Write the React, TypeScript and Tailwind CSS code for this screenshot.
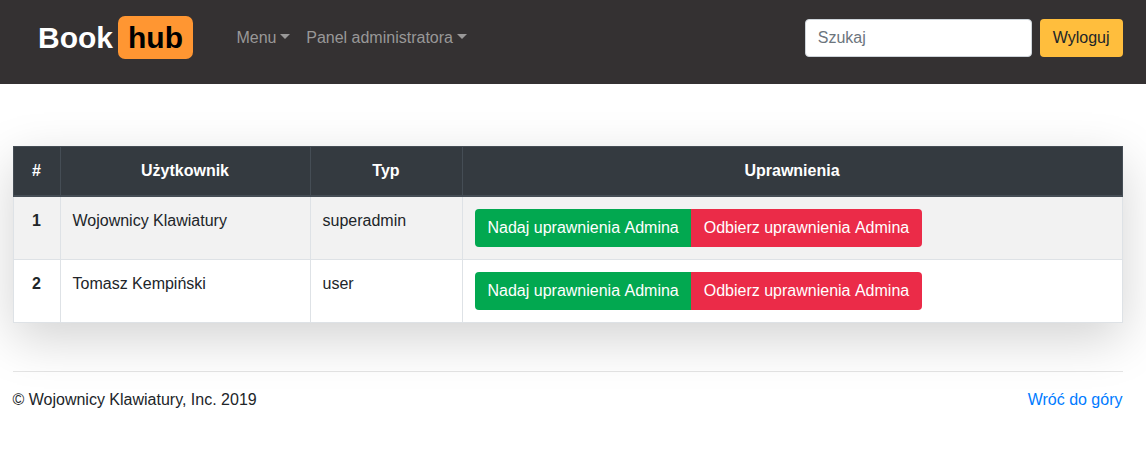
const users = [
  { id: 1, name: 'Wojownicy Klawiatury', type: 'superadmin' },
  { id: 2, name: 'Tomasz Kempiński', type: 'user' },
];

function NavDropdown({ label }: { label: string }) {
  return (
    <a href="#" className="block px-2 py-2 whitespace-nowrap text-[#999898]">
      {label}
      <span className="ml-[3.7px] inline-block border-x-[5px] border-t-[5px] border-b-0 border-x-transparent border-t-current align-[4.08px]" />
    </a>
  );
}

function Navbar() {
  return (
    <nav className="relative z-10 flex h-[84px] items-start bg-[#343132] pr-[23.5px] pl-[38px]">
      <a href="#" className="mt-4 flex items-center text-[30px] leading-[43px] font-bold text-white">
        Book
        <span className="ml-[5px] rounded-[7px] bg-[#ff9632] px-[10px] text-black">hub</span>
      </a>
      <div className="mt-[18px] ml-[35.5px] flex">
        <NavDropdown label="Menu" />
        <NavDropdown label="Panel administratora" />
      </div>
      <form className="mt-[19px] ml-auto flex gap-2">
        <input
          type="search"
          placeholder="Szukaj"
          className="h-[38px] w-[227px] rounded border border-[#ced4da] bg-white px-3 py-1.5 text-[#495057] placeholder:text-[#6c757d]"
        />
        <button type="button" className="h-[38px] rounded bg-[#ffbe3d] px-[13px] text-[#212529]">
          Wyloguj
        </button>
      </form>
    </nav>
  );
}

function UsersTable() {
  return (
    <table className="w-full table-fixed border-collapse border border-[#dee2e6] shadow-[0_16px_48px_rgba(0,0,0,0.175)]">
      <colgroup>
        <col className="w-[47px]" />
        <col className="w-[250px]" />
        <col className="w-[152px]" />
        <col />
      </colgroup>
      <thead className="bg-[#343a40] text-white">
        <tr>
          {['#', 'Użytkownik', 'Typ', 'Uprawnienia'].map((h) => (
            <th key={h} className="border border-b-2 border-[#454d55] p-3 text-center font-bold">
              {h}
            </th>
          ))}
        </tr>
      </thead>
      <tbody>
        {users.map((u) => (
          <tr key={u.id} className="bg-white odd:bg-[#f2f2f2]">
            <th className="border border-[#dee2e6] p-3 text-center align-top font-bold">{u.id}</th>
            <td className="border border-[#dee2e6] p-3 align-top">{u.name}</td>
            <td className="border border-[#dee2e6] p-3 align-top">{u.type}</td>
            <td className="border border-[#dee2e6] p-3 align-top">
              <div className="flex text-white [font-kerning:none]">
                <button type="button" className="h-[38px] rounded-l bg-[#02a850] pr-3 pl-[13px]">
                  Nadaj uprawnienia Admina
                </button>
                <button type="button" className="h-[38px] rounded-r bg-[#eb2b48] pr-[13px] pl-[13px]">
                  Odbierz uprawnienia Admina
                </button>
              </div>
            </td>
          </tr>
        ))}
      </tbody>
    </table>
  );
}

export default function App() {
  return (
    <div className="min-h-[460px] overflow-hidden bg-white font-['Liberation_Sans',Arial,sans-serif] text-base leading-6 text-[#212529]">
      <Navbar />
      <main className="ml-[12.5px] w-[1110px] pt-[62px]">
        <UsersTable />
        <footer className="relative mt-12 flex justify-between border-t border-black/10 pt-4">
          <p>© Wojownicy Klawiatury, Inc. 2019</p>
          <a href="#" className="text-[#007bff]">
            Wróć do góry
          </a>
        </footer>
      </main>
    </div>
  );
}
